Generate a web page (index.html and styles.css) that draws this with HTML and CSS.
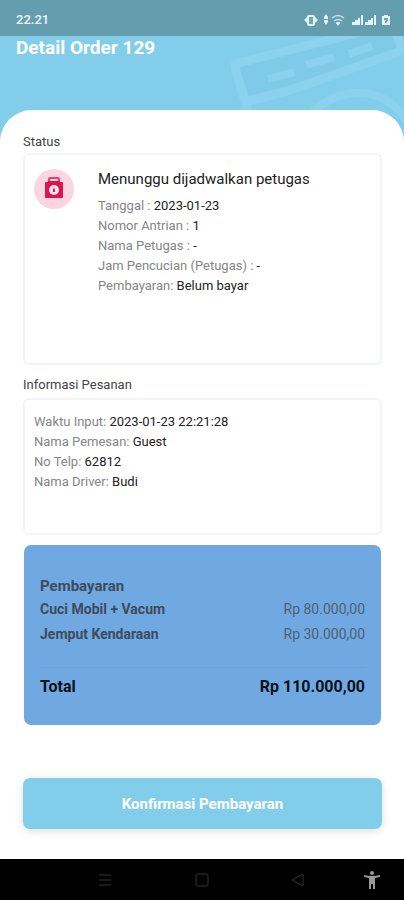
FILE: index.html
```html
<!DOCTYPE html>
<html lang="id">
<head>
<meta charset="utf-8">
<meta name="viewport" content="width=device-width, initial-scale=1">
<title>Detail Order 129</title>
<link rel="stylesheet" href="styles.css">
</head>
<body>
<header class="hero">
  <svg class="hero-art" viewBox="0 0 180 100" fill="none" aria-hidden="true">
    <path d="M10 30 130-2H180V15L95 44 22 66Z" fill="#7fcbe7"/>
    <path d="M140-5 14 27Q10 28 11 32L25 78M20 66Q70 54 95 44L180 14M172-4l6 18" stroke="#8ad2ee" stroke-width="9"/>
    <path d="m44 43 26-7M82 29l28-8M125 18l23-8" stroke="#8ad2ee" stroke-width="8"/>
    <path d="M88 76Q122 48 156 61Q170 67 182 84" stroke="#8ad2ee" stroke-width="8"/>
  </svg>
  <div class="statusbar">
    <span>22.21</span>
    <svg class="status-icons" viewBox="0 0 88 16" fill="#e4f3f8" aria-hidden="true">
      <path d="M4 4 0 8l4 4ZM10 4l4 4-4 4Z"/>
      <rect x="4" y="4" width="6" height="9" rx="1" fill="#70a8b9" stroke="#e4f3f8" stroke-width="2"/>
      <path d="m22 2 2 3v2h-4V5ZM22 13l-2-3V8h4v2Z"/>
      <path d="M28 6q6-5 12 0M30 9q4-3 8 0M32 11q2-1 4 0" fill="none" stroke="#c5e0e9" stroke-width="1.5"/>
      <path d="m32 11 2 3 2-3Z"/>
      <path d="M48 10h3v3h-3ZM51 8h3v5h-3ZM54 6h2v7h-2ZM57 3h2v10h-2ZM61 10h3v3h-3ZM64 8h3v5h-3ZM67 6h2v7h-2ZM70 3h2v10h-2Z"/>
      <path d="M78 4h2V3h4v1h2v9h-8Z"/>
      <path d="M80 6h4v3l-2 2h-1V9h1V8h-2Z" fill="#70a8b9"/>
    </svg>
  </div>
  <h1>Detail Order 129</h1>
</header>
<main class="sheet">
  <h2 class="label">Status</h2>
  <section class="card card-status">
    <span class="badge">
      <svg viewBox="0 0 40 40" aria-hidden="true">
        <path d="M15 14V10q0-1 1-1h8q1 0 1 1v4" fill="none" stroke="#e0446f" stroke-width="2"/>
        <path d="M11 14q0-1 1-1h2v-1h12v1h2q1 0 1 1v14q0 1-1 1H12q-1 0-1-1Z" fill="#dc1550"/>
        <circle cx="20" cy="21" r="5" fill="#fbe4ea"/>
        <path d="m20 18 1 3v2h-2v-2Z" fill="#dc1550"/>
      </svg>
    </span>
    <div>
      <h3>Menunggu dijadwalkan petugas</h3>
      <p>Tanggal : <b>2023-01-23</b></p>
      <p>Nomor Antrian : <b>1</b></p>
      <p>Nama Petugas : <b>-</b></p>
      <p>Jam Pencucian (Petugas) : <b>-</b></p>
      <p>Pembayaran: <b>Belum bayar</b></p>
    </div>
  </section>
  <h2 class="label">Informasi Pesanan</h2>
  <section class="card card-info">
    <p>Waktu Input: <b>2023-01-23 22:21:28</b></p>
    <p>Nama Pemesan: <b>Guest</b></p>
    <p>No Telp: <b>62812</b></p>
    <p>Nama Driver: <b>Budi</b></p>
  </section>
  <section class="payment">
    <h2>Pembayaran</h2>
    <div class="row"><span>Cuci Mobil + Vacum</span><span class="price">Rp 80.000,00</span></div>
    <div class="row"><span>Jemput Kendaraan</span><span class="price">Rp 30.000,00</span></div>
    <div class="row total"><span>Total</span><span>Rp 110.000,00</span></div>
  </section>
  <button class="confirm" type="button">Konfirmasi Pembayaran</button>
</main>
<nav class="navbar" aria-label="Navigasi sistem">
  <button type="button" aria-label="Aplikasi terbaru"><svg viewBox="0 0 20 20"><path d="M4 5h12M4 10h12M4 15h12"/></svg></button>
  <button type="button" aria-label="Beranda"><svg viewBox="0 0 20 20"><rect x="4" y="4" width="12" height="12" rx="2"/></svg></button>
  <button type="button" aria-label="Kembali"><svg viewBox="0 0 20 20"><path d="M15 4v12L4 10Z"/></svg></button>
  <button type="button" class="access" aria-label="Aksesibilitas"><svg viewBox="0 0 20 20"><circle cx="10" cy="3" r="2"/><path d="M2 5q8 2 16 0v2l-5 1v11h-2v-5H9v5H7V8L2 7Z"/></svg></button>
</nav>
</body>
</html>
```
FILE: styles.css
```css
* { box-sizing: border-box; }

body {
  margin: 0;
  min-height: 100vh;
  display: flex;
  flex-direction: column;
  background: #fff;
  color: #333;
  font-family: Roboto, "Liberation Sans", sans-serif;
  font-size: 13px;
  line-height: 20px;
}

h1, h2, h3, p { margin: 0; font-weight: 400; }

.hero {
  position: relative;
  overflow: hidden;
  height: 150px;
  background: #82ceea;
  color: #fff;
}

.hero-art {
  position: absolute;
  top: 36px;
  right: 0;
  width: 180px;
  height: 100px;
}

.statusbar {
  position: relative;
  display: flex;
  align-items: center;
  justify-content: space-between;
  height: 36px;
  padding: 4px 12px 0 16px;
  background: #649dae;
  color: #edf6f9;
  font-weight: 500;
}

.status-icons { width: 88px; height: 16px; }

.hero h1 {
  position: relative;
  padding: 0 16px;
  font-size: 19px;
  font-weight: 700;
  line-height: 24px;
}

.sheet {
  position: relative;
  flex: 1;
  margin-top: -40px;
  padding: 22px 22px 30px 23px;
  border-radius: 32px 32px 0 0;
  background: #fff;
}

.label { font-size: 13px; color: #444; }

.card {
  border: 2px solid #f2f5f5;
  border-radius: 6px;
  color: #858585;
}

.card b { font-weight: 400; color: #222; }

.card-status {
  display: flex;
  gap: 24px;
  min-height: 212px;
  margin: 1px 0 10px;
  padding: 14px 9px;
}

.badge {
  flex: none;
  width: 40px;
  height: 40px;
  border-radius: 50%;
  background: #fbd5df;
}

.badge svg { display: block; }

.card h3 {
  margin-bottom: 6px;
  font-size: 15px;
  line-height: 21px;
  color: #222;
}

.card-info {
  min-height: 137px;
  margin: 3px 0 10px;
  padding: 12px 9px;
}

.payment {
  margin: 0 1px;
  padding: 31px 16px 26px;
  border-radius: 7px;
  background: #70a9e1;
  color: #3f4b5b;
  font-weight: 700;
}

.payment h2 {
  font-size: 15px;
  font-weight: 700;
  line-height: 21px;
}

.row {
  display: flex;
  justify-content: space-between;
  font-size: 14px;
  line-height: 25px;
}

.price { font-weight: 400; color: #4f6074; }

.total {
  margin-top: 20px;
  padding-top: 6px;
  border-top: 1px solid #6aa2da;
  font-size: 16px;
  color: #0b1016;
}

.confirm {
  display: block;
  width: 100%;
  height: 51px;
  margin-top: 53px;
  border: 0;
  border-radius: 7px;
  background: #82ceea;
  box-shadow: 0 2px 8px #0002;
  color: #fff;
  font: 700 15px/20px Roboto, "Liberation Sans", sans-serif;
}

.navbar {
  display: grid;
  grid-template-columns: 97fr 96fr 74fr 20px;
  align-items: center;
  height: 42px;
  padding: 0 22px 0 95px;
  background: #000;
}

.navbar button {
  width: 20px;
  height: 20px;
  padding: 0;
  border: 0;
  background: none;
}

.navbar svg {
  display: block;
  fill: none;
  stroke: #343434;
  stroke-width: 1;
}

.navbar .access svg { fill: #999; stroke: none; }
```
